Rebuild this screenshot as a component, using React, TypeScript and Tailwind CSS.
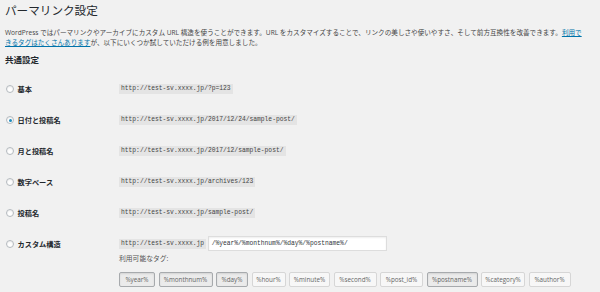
import React from 'react';

const rows = [
  { label: '基本', url: 'http://test-sv.xxxx.jp/?p=123', checked: false },
  { label: '日付と投稿名', url: 'http://test-sv.xxxx.jp/2017/12/24/sample-post/', checked: true },
  { label: '月と投稿名', url: 'http://test-sv.xxxx.jp/2017/12/sample-post/', checked: false },
  { label: '数字ベース', url: 'http://test-sv.xxxx.jp/archives/123', checked: false },
  { label: '投稿名', url: 'http://test-sv.xxxx.jp/sample-post/', checked: false },
];

const tags = [
  { name: '%year%', w: 'w-[36px]', active: true },
  { name: '%monthnum%', w: 'w-[54px]', active: true },
  { name: '%day%', w: 'w-[32px]', active: true },
  { name: '%hour%', w: 'w-[34px]', active: false },
  { name: '%minute%', w: 'w-[41px]', active: false },
  { name: '%second%', w: 'w-[43px]', active: false },
  { name: '%post_id%', w: 'w-[43px]', active: false },
  { name: '%postname%', w: 'w-[51px]', active: true },
  { name: '%category%', w: 'w-[44px]', active: false },
  { name: '%author%', w: 'w-[42px]', active: false },
];

function Radio({ checked }: { checked?: boolean }) {
  return (
    <span className="ml-[1px] flex h-[8px] w-[8px] shrink-0 items-center justify-center rounded-full border border-[#b4b9be] bg-white shadow-[inset_0_1px_2px_rgba(0,0,0,0.08)]">
      {checked && <span className="h-[3px] w-[3px] rounded-full bg-[#1e8cbe]" />}
    </span>
  );
}

function Code({ children }: { children: React.ReactNode }) {
  return (
    <code className="h-[10px] bg-[#e4e4e4] px-[2px] font-['Liberation_Mono',monospace] text-[6.3px] leading-[10px] text-[#444]">
      {children}
    </code>
  );
}

export default function App() {
  return (
    <div className="h-[292px] w-[600px] overflow-hidden bg-[#f1f1f1] px-[5px] font-['Open_Sans','Noto_Sans_CJK_JP',sans-serif] text-[#444]">
      {/* Title */}
      <h1 className="mt-[4px] text-[11.6px] leading-[14px] text-[#23282d]">パーマリンク設定</h1>

      {/* Description */}
      <p className="mt-[9.5px] whitespace-nowrap text-[6.6px] leading-[10px]">
        WordPress ではパーマリンクやアーカイブにカスタム URL 構造を使うことができます。URL をカスタマイズすることで、リンクの美しさや使いやすさ、そして前方互換性を改善できます。
        <a className="text-[#0073aa] underline">
          利用で
          <br />
          きるタグはたくさんあります
        </a>
        が、以下にいくつか試していただける例を用意しました。
      </p>

      <h2 className="mt-[7.5px] text-[8.5px] font-bold leading-[10px] text-[#23282d]">共通設定</h2>

      {/* Permalink options */}
      <div className="mt-[8.5px]">
        {rows.map((row) => (
          <div key={row.label} className="flex h-[31px] items-center">
            <div className="flex w-[114px] items-center gap-[3.5px]">
              <Radio checked={row.checked} />
              <span className="text-[7.2px] font-bold leading-[10px] text-[#23282d]">{row.label}</span>
            </div>
            <Code>{row.url}</Code>
          </div>
        ))}

        {/* Custom structure */}
        <div className="flex pt-[7.5px]">
          <div className="flex h-[15px] w-[114px] items-center gap-[3.5px]">
            <Radio />
            <span className="text-[7.2px] font-bold leading-[10px] text-[#23282d]">カスタム構造</span>
          </div>
          <div className="flex flex-col">
            <div className="flex h-[15px] items-center gap-[2px]">
              <Code>http://test-sv.xxxx.jp</Code>
              <div className="flex h-[15px] w-[179px] items-center border border-[#ddd] bg-white px-[2.5px] font-['Liberation_Mono',monospace] text-[6.3px] text-[#32373c] shadow-[inset_0_1px_2px_rgba(0,0,0,0.07)]">
                /%year%/%monthnum%/%day%/%postname%/
              </div>
            </div>
            <p className="mt-[3px] text-[6.8px] leading-[10px] text-[#555]">利用可能なタグ:</p>
            <div className="mt-[8px] flex gap-[3.5px]">
              {tags.map((t) => (
                <span
                  key={t.name}
                  className={
                    t.active
                      ? `${t.w} flex h-[15px] items-center justify-center rounded-[2px] border border-[#a7aaad] bg-[#ebebeb] text-[6.3px] text-[#666] shadow-[inset_0_1px_2px_rgba(0,0,0,0.1)]`
                      : `${t.w} flex h-[15px] items-center justify-center rounded-[2px] border border-[#d6d6d6] bg-[#f7f7f7] text-[6.3px] text-[#666]`
                  }
                >
                  {t.name}
                </span>
              ))}
            </div>
          </div>
        </div>
      </div>
    </div>
  );
}
